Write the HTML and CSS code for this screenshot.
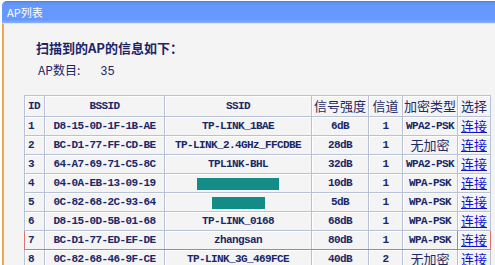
FILE: index.html
```html
<!DOCTYPE html>
<html lang="zh-CN">
<head>
    <meta charset="UTF-8">
    <title>AP列表</title>
    <link rel="stylesheet" href="styles.css">
</head>
<body>
    <div class="panel">
        <div class="title">AP列表</div>
        <div class="content">
            <p class="lead">扫描到的AP的信息如下：</p>
            <p class="count">AP数目:<span class="num">35</span></p>
            <table class="ap-table">
                <colgroup>
                    <col style="width:20px"><col style="width:120px"><col style="width:147px"><col style="width:57px"><col style="width:34px"><col style="width:55px"><col style="width:33px">
                </colgroup>
                <tr class="head">
                    <td class="mono">ID</td><td class="mono">BSSID</td><td class="mono">SSID</td><td>信号强度</td><td>信道</td><td>加密类型</td><td>选择</td>
                </tr>
                <tr>
                    <td class="mono">1</td><td class="mono">D8-15-0D-1F-1B-AE</td><td class="mono">TP-LINK_1BAE</td><td class="mono">6dB</td><td class="mono">1</td><td class="mono">WPA2-PSK</td><td><a href="#">连接</a></td>
                </tr>
                <tr>
                    <td class="mono">2</td><td class="mono">BC-D1-77-FF-CD-BE</td><td class="mono">TP-LINK_2.4GHz_FFCDBE</td><td class="mono">28dB</td><td class="mono">1</td><td>无加密</td><td><a href="#">连接</a></td>
                </tr>
                <tr>
                    <td class="mono">3</td><td class="mono">64-A7-69-71-C5-8C</td><td class="mono">TPL1NK-BHL</td><td class="mono">32dB</td><td class="mono">1</td><td class="mono">WPA2-PSK</td><td><a href="#">连接</a></td>
                </tr>
                <tr>
                    <td class="mono">4</td><td class="mono">04-0A-EB-13-09-19</td><td><span class="redact wide"></span></td><td class="mono">10dB</td><td class="mono">1</td><td class="mono">WPA-PSK</td><td><a href="#">连接</a></td>
                </tr>
                <tr>
                    <td class="mono">5</td><td class="mono">0C-82-68-2C-93-64</td><td><span class="redact narrow"></span></td><td class="mono">5dB</td><td class="mono">1</td><td class="mono">WPA-PSK</td><td><a href="#">连接</a></td>
                </tr>
                <tr>
                    <td class="mono">6</td><td class="mono">D8-15-0D-5B-01-68</td><td class="mono">TP-LINK_0168</td><td class="mono">68dB</td><td class="mono">1</td><td class="mono">WPA-PSK</td><td><a href="#">连接</a></td>
                </tr>
                <tr class="sel">
                    <td class="mono first">7</td><td class="mono">BC-D1-77-ED-EF-DE</td><td class="mono">zhangsan</td><td class="mono">80dB</td><td class="mono">1</td><td class="mono last">WPA-PSK</td><td class="pick"><a href="#">连接</a></td>
                </tr>
                <tr>
                    <td class="mono">8</td><td class="mono">0C-82-68-46-9F-CE</td><td class="mono">TP-LINK_3G_469FCE</td><td class="mono">40dB</td><td class="mono">2</td><td>无加密</td><td><a href="#">连接</a></td>
                </tr>
            </table>
        </div>
    </div>
</body>
</html>
```

FILE: styles.css
```css
body {
    margin: 0;
    background-color: #fff;
    font-family: "Noto Sans CJK SC", sans-serif;
    color: #1d2a66;
}
.panel {
    margin: 1px 0 0 2px;
}
.title {
    height: 21px;
    line-height: 21px;
    padding-left: 5px;
    background: linear-gradient(to bottom, #5f8fef, #6699ff 20%, #6699ff 85%, #8cb0ff);
    border-top: 1px solid #5a80c8;
    border-top-left-radius: 5px;
    color: #fff;
    font-size: 11px;
}
.content {
    background-color: #f4f4f4;
    border-left: 2px solid #f0a850;
    border-top: 1px solid #e4e8f4;
    padding: 15px 0 30px 20px;
    min-height: 200px;
}
.lead {
    margin: 0 0 0 12px;
    font-size: 13px;
    line-height: 18px;
    font-weight: bold;
    color: #1d2466;
}
.count {
    margin: 5px 0 0 14px;
    font-size: 12px;
    line-height: 16px;
    color: #1d2466;
}
.count .num {
    font-family: "Liberation Mono", monospace;
    margin-left: 20px;
}
.ap-table {
    margin-top: 15px;
    border-collapse: collapse;
    table-layout: fixed;
    width: 466px;
}
.ap-table td {
    border: 1px solid #b8c2d6;
    box-shadow: inset 1px 1px 0 #fff;
    height: 18px;
    padding: 0;
    text-align: center;
    font-size: 13px;
    line-height: 16px;
    white-space: nowrap;
    overflow: hidden;
}
.ap-table tr.head td {
    height: 20px;
}
.ap-table td.mono {
    font-family: "Liberation Mono", monospace;
    font-size: 11px;
    font-weight: bold;
    letter-spacing: -0.6px;
    color: #1a2868;
}
.ap-table tr td:first-child {
    text-align: left;
    padding-left: 3px;
}
.ap-table a {
    color: #1010d0;
    text-decoration: underline;
}
.redact {
    display: inline-block;
    height: 12px;
    background-color: #138b86;
    vertical-align: middle;
}
.redact.wide {
    width: 82px;
}
.redact.narrow {
    width: 53px;
}
.ap-table tr.sel td {
    border-top-color: #e07070;
    border-bottom-color: #e07070;
}
.ap-table tr.sel td.first {
    border-left-color: #e07070;
}
.ap-table tr.sel td.last {
    border-right-color: #e07070;
}
.ap-table tr.sel td.pick {
    border: 1px solid #e07070;
}
```
